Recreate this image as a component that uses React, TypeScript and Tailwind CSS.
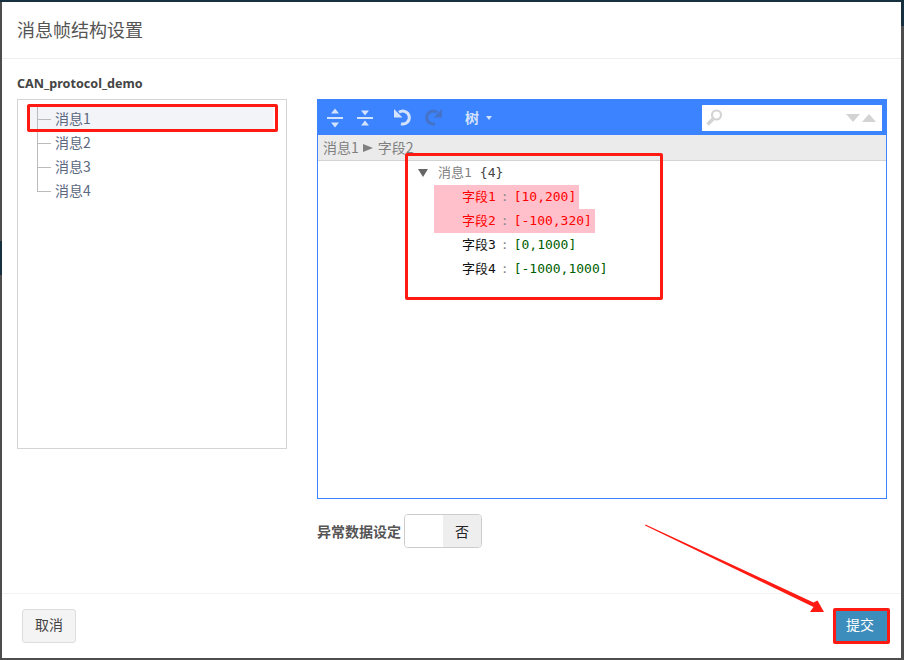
const CJK = "font-['Noto_Sans_CJK_SC','Noto_Sans',sans-serif]";
const MONO = "font-['DejaVu_Sans_Mono','Noto_Sans_CJK_SC',monospace]";

const MESSAGES = ['消息1', '消息2', '消息3', '消息4'];
const FIELDS = [
  { name: '字段1', range: '[10,200]', bad: true },
  { name: '字段2', range: '[-100,320]', bad: true },
  { name: '字段3', range: '[0,1000]', bad: false },
  { name: '字段4', range: '[-1000,1000]', bad: false },
];

function ExpandAll() {
  return (
    <svg width="16" height="20" viewBox="0 0 16 20" fill="#d3e2fd">
      <path d="M8 0.500l4 5h-8zM8 19.500l4-5h-8z" />
      <rect x="0" y="9" width="16" height="2" />
    </svg>
  );
}

function CollapseAll() {
  return (
    <svg width="16" height="20" viewBox="0 0 16 20" fill="#d3e2fd">
      <path d="M8 7.500l-4-5h8zM8 12.500l4 5h-8z" />
      <rect x="0" y="9" width="16" height="2" />
    </svg>
  );
}

function Undo({ color, flip }: { color: string; flip?: boolean }) {
  return (
    <svg width="19" height="19" viewBox="0 0 19 19" className={flip ? '-scale-x-100' : ''}>
      <path d="M6 4.300A6.500 6.500 0 1 1 8 15.800" fill="none" stroke={color} strokeWidth="3" />
      <path d="M1 1v8.500h8.500z" fill={color} />
    </svg>
  );
}

function SearchGlass() {
  return (
    <svg width="17" height="17" viewBox="0 0 17 17">
      <circle cx="10.500" cy="6" r="4.500" fill="none" stroke="#d3d3d3" strokeWidth="2.200" />
      <path d="M7 10L1.500 15.500" stroke="#d3d3d3" strokeWidth="3.500" />
    </svg>
  );
}

export default function App() {
  return (
    <div className={`relative h-[660px] w-[904px] overflow-hidden bg-[#4d4d4d] pt-[2px] pr-[3px] pb-[2px] pl-[2px] ${CJK}`}>
      <div className="absolute top-0 left-0 h-[2px] w-full bg-[#17303f]" />
      <div className="absolute top-[241px] left-0 h-[34px] w-[2px] bg-[#17303f]" />
      <div className="absolute top-0 right-0 h-[26px] w-[3px] bg-[#17303f]" />
      <div className="relative flex h-full flex-col bg-white">
        <div className="flex h-[57px] items-center border-b border-[#eeeeee] pb-[2px] pl-[15px] text-[18px] text-[#555555]">
          消息帧结构设置
        </div>

        <div className="flex flex-1 pt-[15px] pl-[15px]">
          <div className="w-[270px]">
            <div className="h-[25px] font-['Noto_Sans',sans-serif] text-[12.600px] leading-[20px] font-bold text-[#444444]">CAN_protocol_demo</div>
            <div className="h-[350px] border border-[#d4d4d4] pt-[7px] pl-[9px]">
              {MESSAGES.map((m, i) => (
                <div key={m} className={`relative flex h-[24px] items-center pb-[1px] pl-[28px] text-[14px] text-[#5a6880] ${i === 0 ? 'w-[246px] bg-[#f2f4f8]' : ''}`}>
                  <span className="absolute top-0 left-[10px] h-[13px] w-[14px] border-b border-l border-[#bbbbbb]" />
                  {i < 3 && <span className="absolute top-[13px] left-[10px] h-[11px] border-l border-[#bbbbbb]" />}
                  {m}
                </div>
              ))}
            </div>
          </div>

          <div className="ml-[30px] w-[570px] pt-[25px]">
            <div className="h-[400px] border border-[#3b83ff]">
              <div className="flex h-[35px] items-center bg-[#3b83ff] pl-[9px]">
                <ExpandAll />
                <span className="ml-[14px]"><CollapseAll /></span>
                <span className="ml-[20px]"><Undo color="#d3e2fd" /></span>
                <span className="ml-[12px]"><Undo color="#4473c8" flip /></span>
                <span className="ml-[22px] text-[14px] font-bold text-[#d3e2fd]">树</span>
                <span className="ml-[7px] h-0 w-0 border-x-[3px] border-t-[4px] border-x-transparent border-t-[#d3e2fd]" />
                <div className="mr-[4px] ml-auto flex h-[26px] w-[180px] items-center bg-white pr-[6px] pl-[4px]">
                  <SearchGlass />
                  <span className="ml-auto h-0 w-0 border-x-[7px] border-t-[8px] border-x-transparent border-t-[#d3d3d3]" />
                  <span className="ml-[2px] h-0 w-0 border-x-[7px] border-b-[8px] border-x-transparent border-b-[#d3d3d3]" />
                </div>
              </div>
              <div className="flex h-[26px] items-center border-b border-[#d3d3d3] bg-[#ebebeb] pl-[5px] text-[14px] text-[#808080]">
                消息1
                <span className="mr-[5px] ml-[4px] h-0 w-0 border-y-[4px] border-l-[10px] border-y-transparent border-l-[#808080]" />
                字段2
              </div>
              <div className={`pl-[116px] text-[13px] leading-[24px] ${MONO}`}>
                <div className="-ml-[16px] flex h-[24px] items-center text-[#808080]">
                  <span className="h-0 w-0 border-x-[5px] border-t-[8px] border-x-transparent border-t-[#666666]" />
                  <span className="ml-[10px]">消息1</span>
                  <span className="ml-[8px] text-[#444444]">{'{4}'}</span>
                </div>
                {FIELDS.map((f) => (
                  <div key={f.name} className={`flex h-[24px] w-fit items-center pr-[3px] pl-[28px] ${f.bad ? 'bg-[#ffc0cb]' : ''}`}>
                    <span className={f.bad ? 'text-[#ff0000]' : 'text-[#111111]'}>{f.name}</span>
                    <span className="px-[5px] text-[#888888]">:</span>
                    <span className={f.bad ? 'text-[#ff0000]' : 'text-[#006000]'}>{f.range}</span>
                  </div>
                ))}
              </div>
            </div>

            <div className="mt-[15px] flex items-center">
              <span className="text-[14px] font-bold text-[#555555]">异常数据设定</span>
              <div className="ml-[3px] flex h-[34px] w-[78px] overflow-hidden rounded-[4px] border border-[#cccccc]">
                <span className="flex-1 bg-white" />
                <span className="flex w-[38px] items-center justify-center bg-[#eeeeee] text-[14px] text-[#222222]">否</span>
              </div>
            </div>
          </div>
        </div>

        <div className="flex h-[65px] items-start justify-between border-t border-[#f2f2f2] pt-[15px] pr-[14px] pl-[20px]">
          <button type="button" className="h-[34px] w-[54px] rounded-[3px] border border-[#dddddd] bg-[#f4f4f4] pb-[3px] text-[14px] text-[#444444]">取消</button>
          <button type="button" className="h-[34px] w-[54px] rounded-[3px] bg-[#3c8dbc] pb-[3px] text-[14px] text-white">提交</button>
        </div>

        {/* red annotations drawn on top of the screenshot */}
        <div className="absolute top-[102px] left-[25px] h-[28px] w-[251px] rounded-[2px] border-[3px] border-[#ff1a12]" />
        <div className="absolute top-[151px] left-[403px] h-[147px] w-[258px] rounded-[2px] border-[3px] border-[#ff1a12]" />
        <div className="absolute top-[606px] left-[831px] h-[36px] w-[57px] rounded-[2px] border-[3px] border-[#ff1a12]" />
        <svg className="pointer-events-none absolute top-0 left-0" width="899" height="656">
          <path d="M643.500 522.500L811.500 600.500L815.500 598.500L822 610L808 610L811.500 605L643 523.500Z" fill="#ff1a12" />
        </svg>
      </div>
    </div>
  );
}
